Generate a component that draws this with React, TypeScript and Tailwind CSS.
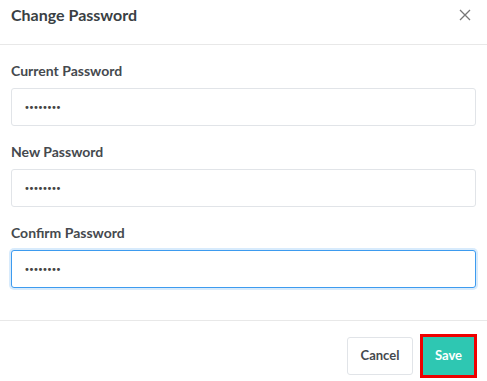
import React from 'react';

const fields = [
  { label: 'Current Password', focused: false },
  { label: 'New Password', focused: false },
  { label: 'Confirm Password', focused: true },
];

const App = () => {
  return (
    <div className="w-[487px] h-[381px] bg-white text-[#444] font-['Lato','Open_Sans',sans-serif]">
      {/* Header */}
      <div className="h-[45px] border-b border-[#e8e8e8] flex items-start justify-between pl-[11px] pr-[16px] pt-[5px]">
        <h1 className="text-[16px] leading-[20px] font-bold text-[#3a3f44]">Change Password</h1>
        <button className="mt-[4px] text-[#777]">
          <svg width="12" height="12" viewBox="0 0 12 12" fill="none" stroke="currentColor" strokeWidth="1.3">
            <path d="M1 1l10 10M11 1L1 11" />
          </svg>
        </button>
      </div>

      {/* Body */}
      <div className="px-[11px] pt-[16px] pb-[32px] flex flex-col gap-[16px]">
        {fields.map((f) => (
          <div key={f.label}>
            <label className="block text-[14px] leading-[20px] font-bold text-[#45494e] mb-[7px]">{f.label}</label>
            <div
              className={`h-[38px] rounded-[3px] border bg-white flex items-center pl-[12px] ${
                f.focused ? 'border-[#3d9bef] shadow-[0_0_0_2px_rgba(61,155,239,0.2)]' : 'border-[#e1e4e8]'
              }`}
            >
              <span className="text-[10px] tracking-[-1.4px] text-[#444] font-['DejaVu_Sans',sans-serif]">••••••••</span>
            </div>
          </div>
        ))}
      </div>

      {/* Footer */}
      <div className="border-t border-[#e8e8e8] flex items-center justify-end pt-[16px] pr-[13px]">
        <button className="h-[38px] w-[66px] rounded-[3px] border border-[#e1e4e8] bg-white text-[13px] font-bold text-[#45494e]">
          Cancel
        </button>
        <button className="ml-[10px] h-[38px] w-[51px] bg-[#2ec7b2] ring-[3px] ring-[#ee0000] text-[13px] font-bold text-white">
          Save
        </button>
      </div>
    </div>
  );
};

export default App;
